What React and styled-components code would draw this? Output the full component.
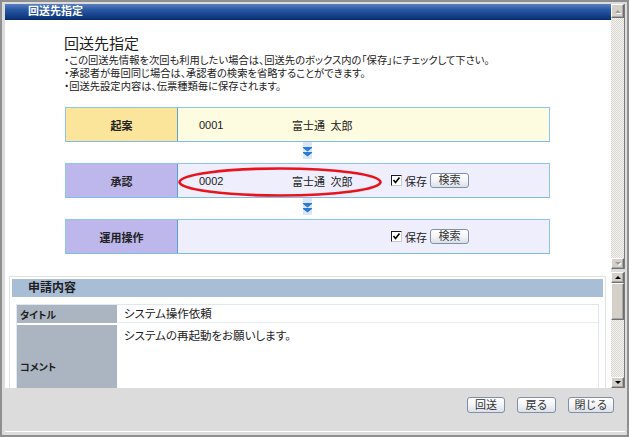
import styled, { createGlobalStyle, css } from "styled-components";

const GlobalStyle = createGlobalStyle`
  html, body {
    margin: 0;
    padding: 0;
  }
  body {
    font-family: "Liberation Sans", "Noto Sans CJK JP", sans-serif;
    font-feature-settings: "palt";
    color: #222;
  }
`;

const Window = styled.div`
  width: 629px;
  height: 437px;
  box-sizing: border-box;
  border: 2px solid #8f8f8f;
  background: #dcdcdc;
  padding: 2px 2px 2px 3px;
  display: flex;
  flex-direction: column;
`;

const Frames = styled.div`
  display: grid;
  grid-template-columns: 1fr 14px;
  grid-template-rows: 265px 3px 116px;
`;

const Pane = styled.div`
  background: #fff;
  overflow: hidden;
  position: relative;
`;

const GapCell = styled.div`
  background: ${(p) => (p.$white ? "#fff" : "#dcdcdc")};
`;

const TitleBar = styled.div`
  height: 16px;
  box-sizing: border-box;
  background: linear-gradient(#5a80c2 0%, #2d5aa4 35%, #123f88 80%, #0c3478 100%);
  border-bottom: 1px solid #0a2c66;
  color: #fff;
  font-weight: 700;
  font-size: 11px;
  line-height: 15px;
  padding-left: 23px;
`;

const Intro = styled.div`
  padding-left: 59px;
  margin-top: 15px;
`;

const Heading = styled.h1`
  margin: 0 0 1px 0;
  font-size: 15px;
  font-weight: 400;
  line-height: 18px;
`;

const Notes = styled.ul`
  margin: 0;
  padding: 0;
  list-style: none;
  font-size: 10.3px;
  line-height: 13px;
`;

const Flow = styled.div`
  margin: 14px 0 0 60px;
  width: 485px;
`;

const Step = styled.div`
  display: grid;
  grid-template-columns: 112px 1fr;
  height: 35px;
  box-sizing: border-box;
  border: 1px solid #8cc6ec;
  border-bottom-color: #7fbbe6;
`;

const StepLabel = styled.div`
  display: flex;
  align-items: center;
  justify-content: center;
  font-weight: 700;
  font-size: 11px;
  border-right: 1px solid #5b9ed8;
  background: ${(p) => (p.$kind === "start" ? "#fbe59b" : "#bdb7ec")};
`;

const StepValue = styled.div`
  position: relative;
  display: grid;
  grid-template-columns: 93px 99px auto;
  align-items: center;
  padding-left: 21px;
  font-size: 11px;
  background: ${(p) => (p.$kind === "start" ? "#fdfbe0" : "#efeefd")};
`;

const SaveBox = styled.div`
  display: flex;
  align-items: center;
  gap: 3px;
`;

const Check = styled.span`
  width: 11px;
  height: 11px;
  box-sizing: border-box;
  border: 1px solid #1e1e1e;
  border-right-color: #c8c8c8;
  border-bottom-color: #c8c8c8;
  background: #fff;
  display: inline-flex;
  align-items: center;
  justify-content: center;
`;

const SaveText = styled.span`
  font-size: 11px;
`;

const SmallButton = styled.button`
  height: ${(p) => p.$h || 16}px;
  width: ${(p) => p.$w}px;
  padding: 0;
  box-sizing: border-box;
  border: 1px solid #8190a6;
  border-radius: 3px;
  background: linear-gradient(#ffffff 0%, #f2f4f7 50%, #dbe1e9 100%);
  font-family: inherit;
  font-size: 11px;
  line-height: 1;
  color: #333;
`;

const ArrowSlot = styled.div`
  height: 21px;
  display: flex;
  justify-content: center;
  align-items: flex-start;
`;

const Ellipse = styled.svg`
  position: absolute;
  left: 0;
  top: 2px;
  width: 205px;
  height: 32px;
  pointer-events: none;
`;

const Section = styled.div`
  margin: 4px 5px 0 4px;
  border: 1px solid #e2e2e2;
  padding: 2px;
`;

const SectionHead = styled.div`
  height: 18px;
  background: #a8bdd6;
  font-weight: 700;
  font-size: 12px;
  line-height: 18px;
  padding-left: 16px;
  color: #1e1e1e;
`;

const Table = styled.div`
  margin: 7px 4px 0 4px;
  border: 1px solid #dfe7ef;
  display: grid;
  grid-template-columns: 100px 1fr;
  row-gap: 2px;
  column-gap: 1px;
`;

const Th = styled.div`
  background: #abb5c1;
  font-weight: 700;
  font-size: 10px;
  display: flex;
  align-items: center;
  padding-left: 3px;
  height: ${(p) => p.$h}px;
`;

const Td = styled.div`
  font-size: 11.5px;
  padding-left: 6px;
  height: ${(p) => p.$h}px;
  box-sizing: border-box;
  border-bottom: 1px solid #e3eaf1;
  line-height: ${(p) => (p.$top ? "14px" : `${p.$h}px`)};
  padding-top: ${(p) => (p.$top ? "4px" : "0")};
`;

const ScrollBar = styled.div`
  display: flex;
  flex-direction: column;
  background: repeating-conic-gradient(#d9d7d1 0 25%, #f4f3ef 0 50%) 0 0 / 2px 2px;
  border-right: 1px solid #7c7c7c;
`;

const raised = css`
  box-sizing: border-box;
  background: #d4d0c8;
  border: 1px solid;
  border-color: #fff #6f6f6f #6f6f6f #fff;
  box-shadow: inset -1px -1px 0 #a8a8a8;
`;

const ScrollButton = styled.div`
  ${raised};
  height: ${(p) => p.$h || 12}px;
  display: flex;
  align-items: center;
  justify-content: center;
`;

const Tri = styled.span`
  width: 0;
  height: 0;
  border-left: 3px solid transparent;
  border-right: 3px solid transparent;
  ${(p) =>
    p.$dir === "up"
      ? css`border-bottom: 3px solid ${p.$off ? "#9a9a9a" : "#000"};`
      : css`border-top: 3px solid ${p.$off ? "#9a9a9a" : "#000"};`}
  filter: ${(p) => (p.$off ? "drop-shadow(1px 1px 0 #fff)" : "none")};
`;

const Track = styled.div`
  flex: 1;
`;

const Thumb = styled.div`
  ${raised};
  height: 37px;
`;

const Footer = styled.div`
  flex: 1;
  display: flex;
  justify-content: flex-end;
  align-items: flex-start;
  gap: 12px;
  padding: 9px 11px 0 0;
  border-bottom: 1px solid #fff;
  margin-bottom: 1px;
`;

const FlowArrow = () => (
  <svg width="9" height="17" viewBox="0 0 9 17">
    <rect width="9" height="17" fill="#d9e7f7" />
    <polygon points="0,5 9,5 9,6 4.5,9.5 0,6" fill="#2b7bd6" />
    <polygon points="0,10 9,10 9,11 4.5,14.5 0,11" fill="#2b7bd6" />
  </svg>
);

const CheckMark = () => (
  <svg width="9" height="9" viewBox="0 0 9 9">
    <polyline points="1.5,4 3.5,6.5 7.5,1.5" fill="none" stroke="#000" strokeWidth="1.6" />
  </svg>
);

const Save = () => (
  <SaveBox>
    <Check>
      <CheckMark />
    </Check>
    <SaveText>保存</SaveText>
    <SmallButton $w={39} $h={15}>検索</SmallButton>
  </SaveBox>
);

const steps = [
  { label: "起案", kind: "start", code: "0001", name: "富士通\u2002太郎", save: false },
  { label: "承認", kind: "route", code: "0002", name: "富士通\u2002次郎", save: true, mark: true },
  { label: "運用操作", kind: "route", code: "", name: "", save: true },
];

export default function App() {
  return (
    <>
      <GlobalStyle />
      <Window>
        <Frames>
          <Pane>
            <TitleBar>回送先指定</TitleBar>
            <Intro>
              <Heading>回送先指定</Heading>
              <Notes>
                <li>・この回送先情報を次回も利用したい場合は、回送先のボックス内の「保存」にチェックして下さい。</li>
                <li>・承認者が毎回同じ場合は、承認者の検索を省略することができます。</li>
                <li>・回送先設定内容は、伝票種類毎に保存されます。</li>
              </Notes>
            </Intro>
            <Flow>
              {steps.map((s, i) => (
                <div key={s.label}>
                  {i > 0 && (
                    <ArrowSlot>
                      <FlowArrow />
                    </ArrowSlot>
                  )}
                  <Step>
                    <StepLabel $kind={s.kind}>{s.label}</StepLabel>
                    <StepValue $kind={s.kind}>
                      <span>{s.code}</span>
                      <span>{s.name}</span>
                      {s.save && <Save />}
                      {s.mark && (
                        <Ellipse viewBox="0 0 205 32">
                          <ellipse cx="102" cy="16" rx="100.5" ry="13.5" fill="none" stroke="#e8141c" strokeWidth="2.6" />
                        </Ellipse>
                      )}
                    </StepValue>
                  </Step>
                </div>
              ))}
            </Flow>
          </Pane>
          <ScrollBar>
            <ScrollButton $h={14}>
              <Tri $dir="up" $off />
            </ScrollButton>
            <Track />
            <ScrollButton $h={11}>
              <Tri $dir="down" $off />
            </ScrollButton>
          </ScrollBar>
          <GapCell $white />
          <GapCell />
          <Pane>
            <Section>
              <SectionHead>申請内容</SectionHead>
              <Table>
                <Th $h={18}>タイトル</Th>
                <Td $h={18}>システム操作依頼</Td>
                <Th $h={82}>コメント</Th>
                <Td $h={82} $top>システムの再起動をお願いします。</Td>
              </Table>
            </Section>
          </Pane>
          <ScrollBar>
            <ScrollButton $h={11}>
              <Tri $dir="up" />
            </ScrollButton>
            <Thumb />
            <Track />
            <ScrollButton $h={11}>
              <Tri $dir="down" />
            </ScrollButton>
          </ScrollBar>
        </Frames>
        <Footer>
          <SmallButton $w={38}>回送</SmallButton>
          <SmallButton $w={39}>戻る</SmallButton>
          <SmallButton $w={46}>閉じる</SmallButton>
        </Footer>
      </Window>
    </>
  );
}
